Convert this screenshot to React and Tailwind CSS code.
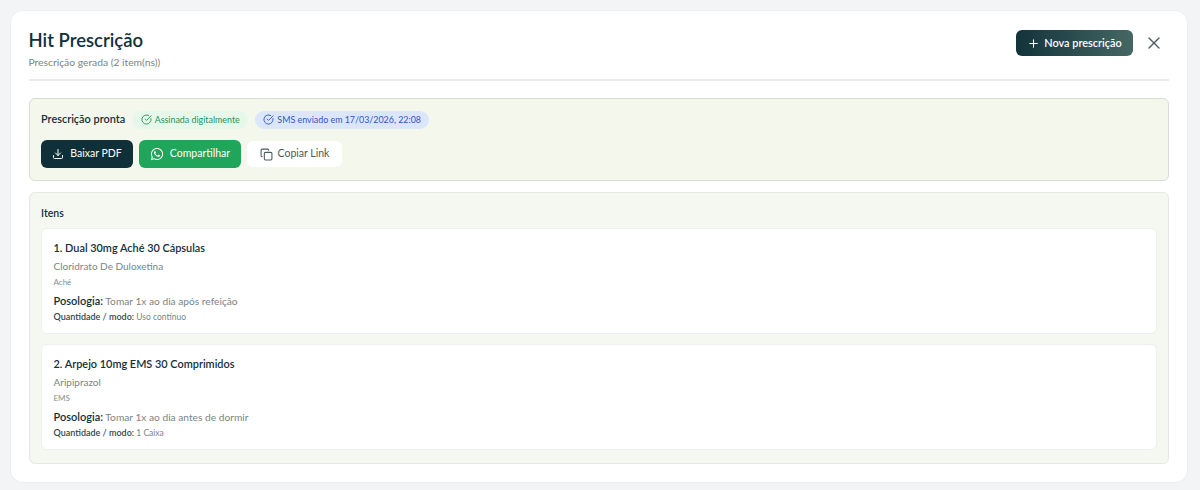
import { CircleCheckBig, Copy, Download, Plus, X } from "lucide-react";
import { FaWhatsapp } from "react-icons/fa";

const items = [
  {
    name: "1. Dual 30mg Aché 30 Cápsulas",
    active: "Cloridrato De Duloxetina",
    lab: "Aché",
    dosage: "Tomar 1x ao dia após refeição",
    quantity: "Uso contínuo",
  },
  {
    name: "2. Arpejo 10mg EMS 30 Comprimidos",
    active: "Aripiprazol",
    lab: "EMS",
    dosage: "Tomar 1x ao dia antes de dormir",
    quantity: "1 Caixa",
  },
];

function ItemCard({ item }) {
  return (
    <div className="h-[106px] bg-white rounded-md border border-[#eef0ec] px-[11.5px] pt-[11px]">
      <p className="text-[10.9px] leading-[16px] font-semibold text-[#12303a]">{item.name}</p>
      <p className="mt-[3px] text-[10px] leading-[15px] text-[#7a8583]">{item.active}</p>
      <p className="mt-[1px] text-[8px] leading-[14px] text-[#858e8c]">{item.lab}</p>
      <p className="mt-[4px] text-[10.2px] leading-[15px] text-[#7a8583]">
        <span className="text-[11px] font-semibold text-[#12303a]">Posologia:</span> {item.dosage}
      </p>
      <p className="text-[8.5px] leading-[15px] text-[#7a8583]">
        <span className="text-[9px] font-semibold text-[#33484e]">Quantidade / modo:</span> {item.quantity}
      </p>
    </div>
  );
}

export default function App() {
  return (
    <main className="h-[490px] bg-[#f2f4f6] pt-[11px] pl-[10.5px] pr-[13px] pb-2 font-['Lato',sans-serif]">
      <section className="h-[471px] bg-white rounded-xl shadow-[0_0_2px_rgba(0,0,0,0.08)] px-[18px] pt-[18px]">
        <header className="h-[52px] flex justify-between border-b-2 border-[#e9ecec]">
          <div>
            <h1 className="text-[18.5px] leading-[22px] font-semibold text-[#12303a]">Hit Prescrição</h1>
            <p className="mt-[4px] text-[10.3px] leading-[14px] text-[#7a8583]">Prescrição gerada (2 item(ns))</p>
          </div>
          <div className="flex items-start gap-[11px]">
            <button className="mt-[1px] h-[26px] w-[117px] rounded-md bg-gradient-to-r from-[#12333a] to-[#456864] text-white text-[10.9px] font-semibold flex items-center justify-center gap-[4px]">
              <Plus size={13} />
              Nova prescrição
            </button>
            <button className="mt-[4px] mr-[5px] text-[#4a5d60]">
              <X size={20} strokeWidth={1.6} />
            </button>
          </div>
        </header>

        <div className="mt-[17px] h-[83px] rounded-md border border-[#d8dcd6] bg-[#f4f7ec] px-[11.5px] pt-[11px]">
          <div className="flex items-center h-[19px]">
            <span className="text-[10.9px] font-semibold text-[#12303a]">Prescrição pronta</span>
            <span className="ml-[7px] h-[18px] w-[116px] rounded-full bg-[#e6f8ea] text-[#2a9058] text-[8.9px] flex items-center justify-center gap-[3px]">
              <CircleCheckBig size={11} />
              Assinada digitalmente
            </span>
            <span className="ml-[7px] h-[18px] w-[174px] rounded-full bg-[#dbe6fb] text-[#2f55c8] text-[8.9px] flex items-center justify-center gap-[3px]">
              <CircleCheckBig size={11} />
              SMS enviado em 17/03/2026, 22:08
            </span>
          </div>
          <div className="flex items-center gap-[6px] mt-[11px]">
            <button className="h-[28px] w-[92px] rounded-md bg-[#0f3038] text-white text-[10.5px] flex items-center justify-center gap-[6px]">
              <Download size={12} />
              Baixar PDF
            </button>
            <button className="h-[28px] w-[102px] rounded-md bg-[#20a65b] text-white text-[10.5px] flex items-center justify-center gap-[6px]">
              <FaWhatsapp size={14} />
              Compartilhar
            </button>
            <button className="h-[26px] w-[95px] rounded-md bg-white text-[#4a5b5e] text-[10.5px] flex items-center justify-center gap-[5px]">
              <Copy size={13} />
              Copiar Link
            </button>
          </div>
        </div>

        <div className="mt-[11px] h-[272px] rounded-md border border-[#e6e9e3] bg-[#f5f8f1] px-[11.5px] pt-[13px]">
          <p className="text-[10.5px] leading-[14px] font-semibold text-[#12303a]">Itens</p>
          <div className="mt-[8px] flex flex-col gap-[10px]">
            {items.map((item) => (
              <ItemCard key={item.name} item={item} />
            ))}
          </div>
        </div>
      </section>
    </main>
  );
}
